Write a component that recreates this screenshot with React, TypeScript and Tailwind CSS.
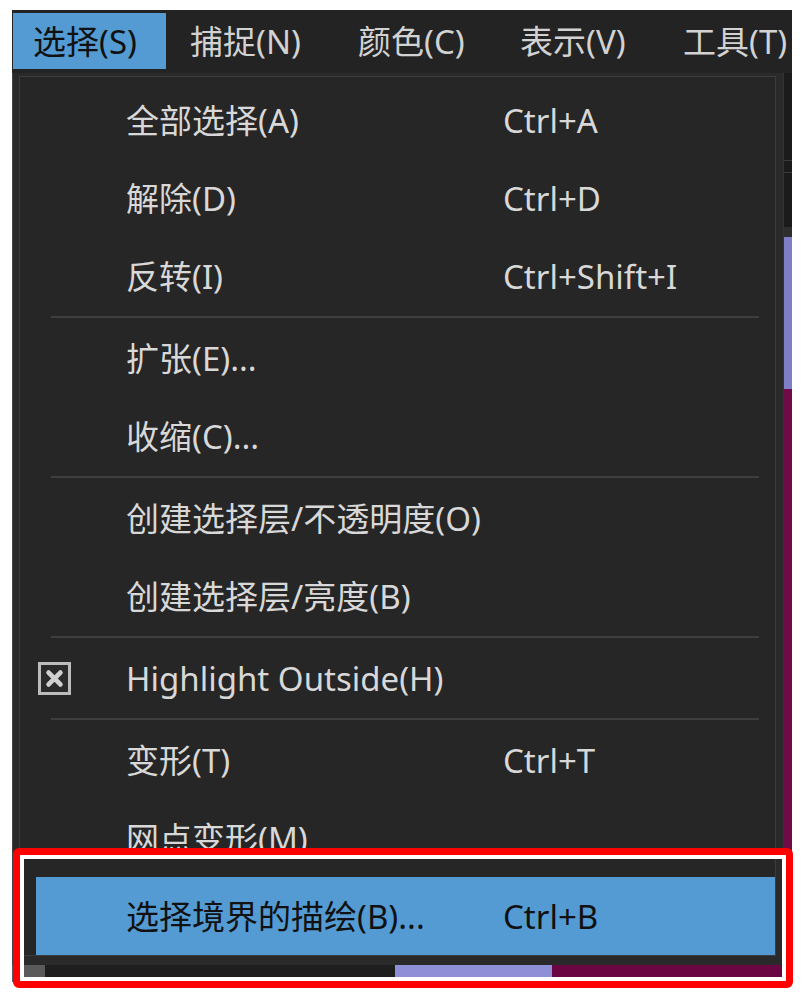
import React from 'react';

type Item =
  | { kind: 'item'; label: string; shortcut?: string; checked?: boolean; active?: boolean }
  | { kind: 'sep' };

// menu bar entries with the box width each one takes in the bar
const menuBar = [
  { label: '选择(S)', w: 'w-[153px] pl-[20px]' },
  { label: '捕捉(N)', w: 'w-[168px] pl-[24px]' },
  { label: '颜色(C)', w: 'w-[162px] pl-[24px]' },
  { label: '表示(V)', w: 'w-[163px] pl-[24px]' },
  { label: '工具(T)', w: 'w-[140px] pl-[24px]' },
];

const items: Item[] = [
  { kind: 'item', label: '全部选择(A)', shortcut: 'Ctrl+A' },
  { kind: 'item', label: '解除(D)', shortcut: 'Ctrl+D' },
  { kind: 'item', label: '反转(I)', shortcut: 'Ctrl+Shift+I' },
  { kind: 'sep' },
  { kind: 'item', label: '扩张(E)...' },
  { kind: 'item', label: '收缩(C)...' },
  { kind: 'sep' },
  { kind: 'item', label: '创建选择层/不透明度(O)' },
  { kind: 'item', label: '创建选择层/亮度(B)' },
  { kind: 'sep' },
  { kind: 'item', label: 'Highlight Outside(H)', checked: true },
  { kind: 'sep' },
  { kind: 'item', label: '变形(T)', shortcut: 'Ctrl+T' },
  { kind: 'item', label: '网点变形(M)' },
  { kind: 'item', label: '选择境界的描绘(B)...', shortcut: 'Ctrl+B', active: true },
];

function CheckBox() {
  return (
    <div className="w-[33px] h-[33px] border-[3px] border-[#bcbcbc] bg-[#2a2a2a] flex items-center justify-center shrink-0">
      <svg width="21" height="21" viewBox="0 0 16 16">
        <path d="M3.5 3.5 L12.5 12.5 M12.5 3.5 L3.5 12.5" stroke="#d0d0d0" strokeWidth="3.6" strokeLinecap="round" />
      </svg>
    </div>
  );
}

function MenuRow({ item }: { item: Extract<Item, { kind: 'item' }> }) {
  return (
    <div
      className={`h-[78px] flex items-center ${
        item.active ? 'ml-[16px] pl-[2px] bg-[#549bd3] text-[#111111]' : 'pl-[18px] text-[#d8d8d8]'
      }`}
    >
      <div className="w-[33px] shrink-0 flex items-center">{item.checked && <CheckBox />}</div>
      <div className="ml-[55px] w-[377px] shrink-0 whitespace-nowrap">{item.label}</div>
      {item.shortcut && <div className="whitespace-nowrap">{item.shortcut}</div>}
    </div>
  );
}

export default function App() {
  return (
    <div className="w-[805px] h-[1000px] bg-white pt-[10px] pl-[12px] font-['Noto_Sans','Noto_Sans_CJK_SC',sans-serif] text-[33px] leading-none">
      <div className="relative w-[780px] h-[972px] bg-[#1e1e1e] overflow-hidden">
        {/* Menu bar */}
        <div className="h-[63px] bg-[#232323] flex items-start pt-[3px] pl-[1px] text-[#d2d2d2]">
          {menuBar.map((m, i) => (
            <div
              key={m.label}
              className={`h-[56px] shrink-0 flex items-center whitespace-nowrap ${m.w} ${
                i === 0 ? 'bg-[#549bd3] text-[#111111]' : ''
              }`}
            >
              {m.label}
            </div>
          ))}
        </div>

        {/* Canvas behind the menu */}
        <div className="h-[909px] flex flex-col">
          <div className="h-[892px] flex">
            <div className="flex-1 bg-[#1e1e1e]" />
            <div className="w-[9px] flex flex-col border-l border-[#333333]">
              <div className="h-[87px] bg-[#1b1b1b]" />
              <div className="h-[1px] bg-[#3a3a3a]" />
              <div className="h-[11px] bg-[#1b1b1b]" />
              <div className="h-[1px] bg-[#3a3a3a]" />
              <div className="h-[54px] bg-[#1b1b1b]" />
              <div className="h-[10px] bg-[#2e2e2e]" />
              <div className="h-[152px] bg-[#7d7ec6]" />
              <div className="flex-1 bg-[#6f0b47]" />
            </div>
          </div>
          <div className="h-[17px] flex">
            <div className="w-[33px] bg-[#5a5a5a]" />
            <div className="w-[350px] bg-[#1e1e1e]" />
            <div className="w-[157px] bg-[#8f8fd8]" />
            <div className="flex-1 bg-[#6a0743]" />
          </div>
        </div>

        {/* Dropdown menu */}
        <div className="absolute left-0 top-[63px] w-[771px] bg-[#2a2a2a] pt-[3px] pl-[6px] pr-[7px] pb-[9px] border-l border-[#444444]">
          <div className="border border-[#3c3c3c] bg-[#262626] pt-[4px]">
            {items.map((it, i) =>
              it.kind === 'sep' ? (
                <div key={i} className="h-[4px] flex items-center pl-[31px] pr-[16px]">
                  <div className="h-[2px] w-full bg-[#3e3e3e]" />
                </div>
              ) : (
                <MenuRow key={i} item={it} />
              )
            )}
          </div>
        </div>
      </div>

      {/* Red annotation frame */}
      <div className="absolute left-[13px] top-[848px] w-[780px] h-[140px] border-[7px] border-[#ff0000] rounded-[6px]">
        <div className="w-full h-full border-[4px] border-white" />
      </div>
    </div>
  );
}
